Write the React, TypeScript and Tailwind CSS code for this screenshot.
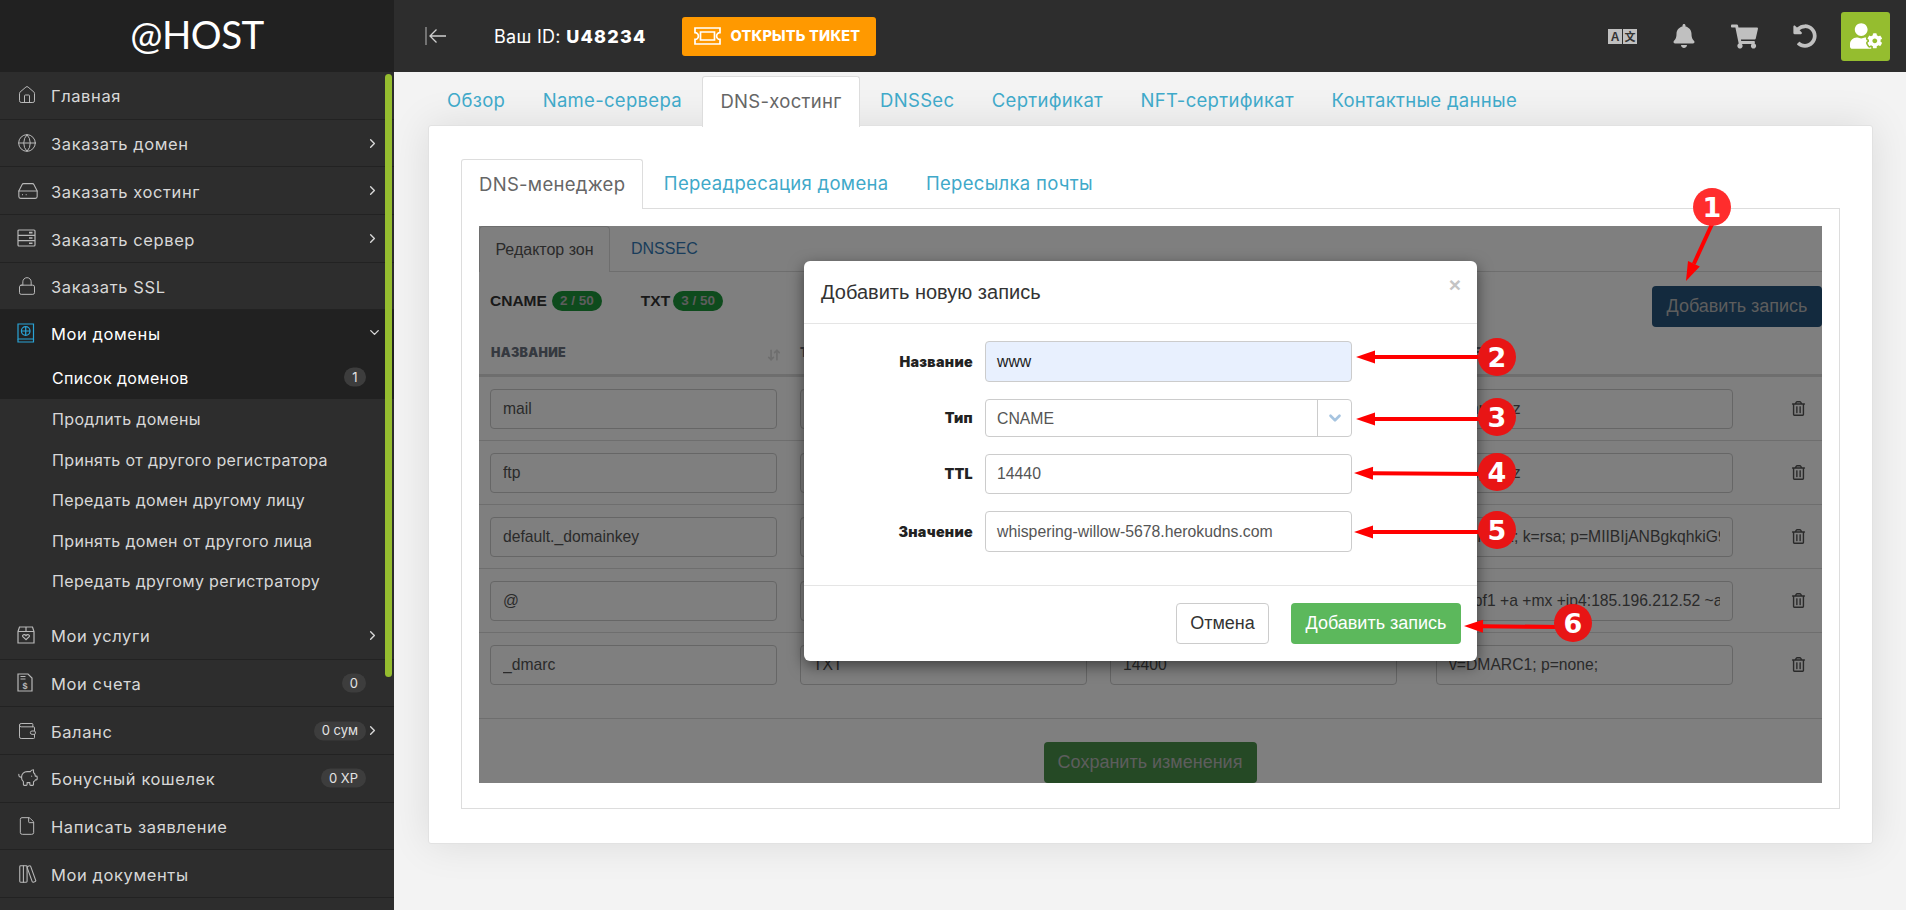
import {
  ArrowDownUp,
  ChevronDown,
  ChevronRight,
  File,
  Globe,
  HardDrive,
  House,
  LibraryBig,
  Lock,
  PiggyBank,
  Wallet,
} from "lucide-react";
import { FaBell, FaRegTrashAlt, FaShoppingCart, FaUndoAlt, FaUserCog } from "react-icons/fa";
import type { ReactNode } from "react";

const mont = "font-['Inter','Noto_Sans',sans-serif]";
const arial = "font-['Liberation_Sans',Arial,sans-serif]";

function PassportIcon() {
  return (
    <svg width="18" height="20" viewBox="0 0 18 20" fill="none" stroke="#2aa3d6" strokeWidth="1.2">
      <path d="M1 1h15.5v15H1z" />
      <path d="M1 16v3h15.5v-3" />
      <circle cx="8.7" cy="8" r="4.3" />
      <path d="M4.4 8h8.6M8.7 3.7v8.6" />
    </svg>
  );
}

function ServerIcon() {
  return (
    <svg width="19" height="18" viewBox="0 0 19 18" fill="none" stroke="#b8b8b8" strokeWidth="1.2">
      <rect x="1" y="1" width="17" height="16" rx="1" />
      <path d="M1 6.3h17M1 11.6h17" />
      <path d="M12 3.6h3.5M12 9h3.5M12 14.3h3.5" strokeWidth="1.6" />
    </svg>
  );
}

function BoxIcon() {
  return (
    <svg width="18" height="18" viewBox="0 0 18 18" fill="none" stroke="#b8b8b8" strokeWidth="1.2">
      <path d="M1 5.5 2.5 1h13L17 5.5V17H1z" />
      <path d="M1 5.5h16M9 1v4.5" />
      <path d="M9 13.6 5.8 10.6c-1-1.6 1.8-3 3.2-1 1.4-2 4.2-.6 3.2 1z" />
    </svg>
  );
}

function InvoiceIcon() {
  return (
    <svg width="16" height="19" viewBox="0 0 16 19" fill="none" stroke="#b8b8b8" strokeWidth="1.2">
      <path d="M1 1h10l4 4v13H1z" />
      <path d="M3.5 3.5h5M3.5 6h5" />
      <text x="8" y="15.5" fontSize="9" fontWeight="700" fontFamily="Liberation Sans" fill="#b8b8b8" stroke="none" textAnchor="middle">$</text>
    </svg>
  );
}

function TicketIcon() {
  return (
    <svg width="27" height="18" viewBox="0 0 27 18" fill="none" stroke="#fff" strokeWidth="1.7">
      <path d="M1 1h25v4.6a3.4 3.4 0 0 0 0 6.8V17H1v-4.6a3.4 3.4 0 0 0 0-6.8z" />
      <path d="M6.5 5h14v8h-14z" />
    </svg>
  );
}

function CollapseIcon() {
  return (
    <svg width="22" height="18" viewBox="0 0 22 18" fill="none" strokeWidth="1.3">
      <path d="M1 0v18" stroke="#9a9a9a" />
      <path d="M21 9H5M11.5 2.5 5 9l6.5 6.5" stroke="#cfcfcf" />
    </svg>
  );
}

function LangIcon() {
  return (
    <svg width="29" height="15" viewBox="0 0 29 15">
      <rect x="0" y="0" width="14" height="15" fill="#c0c0c0" />
      <rect x="15" y="0" width="14" height="15" fill="#c0c0c0" />
      <text x="7" y="12" textAnchor="middle" fontSize="12" fontWeight="700" fontFamily="Liberation Sans" fill="#333333">A</text>
      <text x="22" y="12" textAnchor="middle" fontSize="11" fontWeight="700" fontFamily="Noto Sans CJK SC" fill="#333333">文</text>
    </svg>
  );
}

const iconProps = { size: 20, strokeWidth: 1.2, color: "#b8b8b8" };

type Item = { label: string; icon: ReactNode; arrow?: boolean; badge?: string };

const topItems: Item[] = [
  { label: "Главная", icon: <House {...iconProps} /> },
  { label: "Заказать домен", icon: <Globe {...iconProps} />, arrow: true },
  { label: "Заказать хостинг", icon: <HardDrive {...iconProps} size={22} />, arrow: true },
  { label: "Заказать сервер", icon: <ServerIcon />, arrow: true },
  { label: "Заказать SSL", icon: <Lock {...iconProps} /> },
];

const subItems = [
  "Продлить домены",
  "Принять от другого регистратора",
  "Передать домен другому лицу",
  "Принять домен от другого лица",
  "Передать другому регистратору",
];

const bottomItems: Item[] = [
  { label: "Мои услуги", icon: <BoxIcon />, arrow: true },
  { label: "Мои счета", icon: <InvoiceIcon />, badge: "0" },
  { label: "Баланс", icon: <Wallet {...iconProps} />, badge: "0 сум", arrow: true },
  { label: "Бонусный кошелек", icon: <PiggyBank {...iconProps} size={22} />, badge: "0 XP" },
  { label: "Написать заявление", icon: <File {...iconProps} /> },
  { label: "Мои документы", icon: <LibraryBig {...iconProps} size={22} /> },
];

const labelText = "text-[16.5px] tracking-[0.6px]";
const subText = "text-[16px] tracking-[0.35px]";

function Badge({ children }: { children: ReactNode }) {
  return (
    <span className="absolute right-[28px] top-1/2 -translate-y-1/2 flex h-[19px] items-center rounded-full bg-[#3d3d3d] px-[8px] text-[13px] text-[#e4e4e4]">
      {children}
    </span>
  );
}

function SideRow({ item }: { item: Item }) {
  return (
    <div className="relative flex h-[47.7px] shrink-0 items-center border-b border-[#222222] text-[#d8d8d8]">
      <span className="flex w-[51px] justify-start pl-[17px]">{item.icon}</span>
      <span className={`mt-[3px] ${labelText}`}>{item.label}</span>
      {item.badge && <Badge>{item.badge}</Badge>}
      {item.arrow && <ChevronRight className="absolute right-[14px]" size={15} color="#d8d8d8" strokeWidth={2.2} />}
    </div>
  );
}

function Sidebar() {
  return (
    <aside className={`relative flex h-full w-[394px] shrink-0 flex-col overflow-hidden bg-[#2d2d2d] ${mont}`}>
      <div className="flex h-[72px] shrink-0 items-center justify-center bg-[#212121] pb-[3px] font-['Lato',sans-serif] text-[38.5px] tracking-[-0.5px] text-white">
        @HOST
      </div>
      {topItems.map((item) => (
        <SideRow key={item.label} item={item} />
      ))}
      <div className="h-[88.5px] shrink-0 bg-[#212121] text-white">
        <div className="relative flex h-[45px] items-center">
          <span className="flex w-[51px] pl-[17px]"><PassportIcon /></span>
          <span className={`mt-[3px] ${labelText}`}>Мои домены</span>
          <ChevronDown className="absolute right-[12px]" size={15} strokeWidth={2.2} color="#d8d8d8" />
        </div>
        <div className={`relative flex h-[43px] items-center pl-[52px] pt-[3px] ${subText}`}>
          Список доменов
          <Badge>1</Badge>
        </div>
      </div>
      <div className="flex h-[213px] shrink-0 flex-col text-[#d8d8d8]">
        {subItems.map((label) => (
          <div key={label} className={`flex h-[40.5px] shrink-0 items-center pl-[52px] ${subText}`}>
            {label}
          </div>
        ))}
      </div>
      {bottomItems.map((item) => (
        <SideRow key={item.label} item={item} />
      ))}
      <div className="absolute right-[2px] top-[74px] h-[603px] w-[7px] rounded-full bg-[#95bd2f]" />
    </aside>
  );
}

function TopBar() {
  return (
    <header className={`flex h-[72px] shrink-0 items-center bg-[#2d2d2d] pl-[31px] pr-[16px] text-white ${mont}`}>
      <CollapseIcon />
      <span className="ml-[47px] text-[18px] tracking-[0.3px]">
        Ваш ID: <b className="font-extrabold tracking-[1.2px]">U48234</b>
      </span>
      <button className="ml-[35px] flex h-[39px] w-[194px] items-center rounded-[3px] bg-[#ff9900] pl-[12px] text-[14.5px] font-extrabold tracking-[0.2px]">
        <TicketIcon />
        <span className="ml-[10px]">ОТКРЫТЬ ТИКЕТ</span>
      </button>
      <div className="ml-auto flex items-center text-[#c0c0c0]">
        <LangIcon />
        <FaBell size={24} className="ml-[34.5px]" />
        <FaShoppingCart size={27} className="ml-[35.5px]" />
        <FaUndoAlt size={24} className="ml-[35px]" />
        <div className="ml-[24px] flex size-[49px] items-center justify-center rounded-[3px] bg-[#95bd2f] text-white">
          <FaUserCog size={32} />
        </div>
      </div>
    </header>
  );
}

function Tabs({ items, active, size }: { items: string[]; active: string; size: string }) {
  return (
    <div className={`flex text-[18.5px] tracking-[0.3px] ${size}`}>
      {items.map((t) =>
        t === active ? (
          <div key={t} className="relative z-10 -mb-[1px] mr-[3.5px] flex items-center rounded-t-[3px] border border-b-0 border-[#dddddd] bg-white px-[17px] text-[#666666]">
            {t}
          </div>
        ) : (
          <div key={t} className="mr-[3.5px] flex items-center px-[17px] text-[#3fa9c9]">
            {t}
          </div>
        ),
      )}
    </div>
  );
}

const rows = [
  { name: "mail", type: "CNAME", value: "sample.uz" },
  { name: "ftp", type: "CNAME", value: "sample.uz" },
  { name: "default._domainkey", type: "TXT", value: "v=DKIM1; k=rsa; p=MIIBIjANBgkqhkiG9w0BAQEFAAOCAQ8A" },
  { name: "@", type: "TXT", value: "v=spf1 +a +mx +ip4:185.196.212.52 ~all" },
  { name: "_dmarc", type: "TXT", value: "v=DMARC1; p=none;" },
];

function Cell({ w, children }: { w: string; children: ReactNode }) {
  return (
    <div className={`flex h-[40px] shrink-0 items-center rounded-[4px] border border-[#cccccc] px-[12px] text-[15.7px] text-[#555555] ${w}`}>
      <span className="block w-full overflow-hidden whitespace-nowrap">{children}</span>
    </div>
  );
}

function HeadCell({ w, children }: { w: string; children: ReactNode }) {
  return (
    <div className={`flex shrink-0 items-center justify-between ${w}`}>
      <span className={`${mont} text-[12.5px] font-black tracking-[0.3px] text-[#6b7280]`}>{children}</span>
    </div>
  );
}

function ZoneEditor() {
  return (
    <div className={`relative mx-[17px] mt-[17px] h-[557px] ${arial}`}>
      <div className="flex h-[46px] border-b border-[#dddddd] text-[16px]">
        <div className="relative -mb-[1px] flex w-[131px] items-center justify-center rounded-t-[4px] border border-b-0 border-[#dddddd] bg-white text-[#555555]">
          Редактор зон
        </div>
        <div className="flex items-center pl-[21px] text-[#337ab7]">DNSSEC</div>
      </div>
      <div className="flex h-[58px] items-center justify-between pl-[11px]">
        <div className="flex items-center text-[15.5px] font-bold text-[#333333]">
          CNAME
          <span className="ml-[5px] flex h-[20px] w-[50px] items-center justify-center rounded-full bg-[#1c973a] text-[13.5px] text-[#bababa]">2 / 50</span>
          <span className="ml-[39px]">TXT</span>
          <span className="ml-[3px] flex h-[20px] w-[50px] items-center justify-center rounded-full bg-[#1c973a] text-[13.5px] text-[#bababa]">3 / 50</span>
        </div>
        <button className="mt-[10px] h-[41px] w-[170px] rounded-[4px] bg-[#26547c] text-[18px] text-[#bababa]">
          Добавить запись
        </button>
      </div>
      <div className="relative flex h-[47px] items-center border-b-[3px] border-[#dddddd] pl-[12px] pt-[3px]">
        <HeadCell w="w-[309px]">НАЗВАНИЕ</HeadCell>
        <HeadCell w="w-[310px]">ТИП</HeadCell>
        <HeadCell w="w-[326px]">TTL</HeadCell>
        <HeadCell w="w-[297px]">ЗНАЧЕНИЕ</HeadCell>
        <ArrowDownUp size={14} strokeWidth={3} color="#dddddd" className="absolute left-[288px] top-[18px]" />
      </div>
      {rows.map((r, i) => (
        <div
          key={r.name}
          className={`flex border-b border-[#dddddd] pl-[11px] ${i === rows.length - 1 ? "h-[86px] pt-[12px]" : "h-[64px] items-center"}`}
        >
          <Cell w="w-[287px]">{r.name}</Cell>
          <Cell w="ml-[23px] w-[287px]">{r.type}</Cell>
          <Cell w="ml-[23px] w-[287px]">14400</Cell>
          <Cell w="ml-[39px] w-[297px]">{r.value}</Cell>
          <FaRegTrashAlt size={15} className={`ml-[58px] text-[#555555] ${i === rows.length - 1 ? "mt-[12px]" : ""}`} />
        </div>
      ))}
      <div className="flex h-[64px] items-end justify-center pr-[1px]">
        <button className="h-[41px] w-[213px] rounded-[4px] bg-[#4a924a] text-[18px] text-[#bababa]">
          Сохранить изменения
        </button>
      </div>
      <div className="absolute inset-0 z-10 bg-[rgba(0,0,0,0.5)]" />
    </div>
  );
}

function Field({ label, value, h, tone }: { label: string; value: string; h: string; tone?: string }) {
  return (
    <div className="flex items-center">
      <div className={`${mont} w-[169px] pr-[12px] text-right text-[14.3px] font-black tracking-[0.3px] text-[#222222]`}>{label}</div>
      <div className={`flex w-[367px] items-center rounded-[4px] border border-[#cccccc] pl-[11px] text-[15.8px] ${h} ${tone ?? "bg-white text-[#555555]"}`}>
        {value}
      </div>
    </div>
  );
}

function RecordDialog() {
  return (
    <div className={`absolute left-[804px] top-[261px] flex h-[400px] w-[673px] flex-col rounded-[6px] bg-white shadow-[0_5px_15px_rgba(0,0,0,0.5)] ${arial}`}>
      <div className="relative flex h-[63px] shrink-0 items-center border-b border-[#e5e5e5] pl-[17px] text-[20px] text-[#333333]">
        Добавить новую запись
        <span className="absolute right-[16px] top-[10px] text-[21px] font-bold leading-[28px] text-[#c4c4c4]">×</span>
      </div>
      <div className="flex h-[262px] shrink-0 flex-col border-b border-[#e5e5e5] pl-[12px] pt-[17px]">
        <Field label="Название" value="www" h="h-[41px]" tone="bg-[#e8f0fe] text-[#222222]" />
        <div className="relative mt-[17px]">
          <Field label="Тип" value="CNAME" h="h-[38px] pt-[1px]" />
          <div className="absolute left-[501px] top-0 flex h-[38px] w-[35px] items-center justify-center border-l border-[#cccccc]">
            <ChevronDown size={18} strokeWidth={3.5} color="#a6c4e0" />
          </div>
        </div>
        <div className="mt-[17px]"><Field label="TTL" value="14440" h="h-[40px]" /></div>
        <div className="mt-[17px]"><Field label="Значение" value="whispering-willow-5678.herokudns.com" h="h-[41px]" /></div>
      </div>
      <div className="flex flex-1 items-center justify-end gap-[22px] pr-[16px] text-[18px]">
        <button className="h-[41px] w-[93px] rounded-[4px] border border-[#cccccc] bg-white text-[#333333]">Отмена</button>
        <button className="h-[41px] w-[170px] rounded-[4px] bg-[#5cb85c] text-white">Добавить запись</button>
      </div>
    </div>
  );
}

function Pin({ n, x, y, fill = "#e81515" }: { n: string; x: number; y: number; fill?: string }) {
  return (
    <g>
      <circle cx={x} cy={y} r="19" fill={fill} />
      <text x={x} y={y + 10} textAnchor="middle" fontSize="27" fontWeight="700" fontFamily="DejaVu Sans" fill="#fff">
        {n}
      </text>
    </g>
  );
}

function Arrow({ x1, y1, x2, y2 }: { x1: number; y1: number; x2: number; y2: number }) {
  const a = Math.atan2(y2 - y1, x2 - x1);
  const len = 19;
  const wid = 6.5;
  const bx = x2 - Math.cos(a) * len;
  const by = y2 - Math.sin(a) * len;
  const px = -Math.sin(a) * wid;
  const py = Math.cos(a) * wid;
  return (
    <g>
      <line x1={x1} y1={y1} x2={bx} y2={by} stroke="#ff0000" strokeWidth="4" />
      <polygon points={`${x2},${y2} ${bx + px},${by + py} ${bx - px},${by - py}`} fill="#ff0000" />
    </g>
  );
}

function Annotations() {
  return (
    <svg className="pointer-events-none absolute left-0 top-0 z-30" width="1906" height="910">
      <Arrow x1={1713} y1={222} x2={1686} y2={281} />
      <Arrow x1={1485} y1={357} x2={1356} y2={357} />
      <Arrow x1={1485} y1={419} x2={1356} y2={419} />
      <Arrow x1={1485} y1={474} x2={1354} y2={473} />
      <Arrow x1={1485} y1={532} x2={1354} y2={532} />
      <Arrow x1={1560} y1={627} x2={1464} y2={626} />
      <Pin n="1" x={1712} y={207} fill="#ff2d2d" />
      <Pin n="2" x={1497} y={357} />
      <Pin n="3" x={1497} y={417} />
      <Pin n="4" x={1497} y={472} />
      <Pin n="5" x={1497} y={530} />
      <Pin n="6" x={1573} y={623} />
    </svg>
  );
}

export default function App() {
  return (
    <div className="relative flex h-screen w-full overflow-hidden bg-[#f3f3f3]">
      <Sidebar />
      <div className="flex min-w-0 flex-1 flex-col">
        <TopBar />
        <main className={`flex-1 pl-[34px] pr-[33px] pt-[4px] ${mont}`}>
          <div className="ml-[2px] h-[50px]">
            <Tabs
              size="h-[50px]"
              active="DNS-хостинг"
              items={["Обзор", "Name-сервера", "DNS-хостинг", "DNSSec", "Сертификат", "NFT-сертификат", "Контактные данные"]}
            />
          </div>
          <div className="-mt-[1px] h-[719px] rounded-[3px] border border-[#e2e2e2] bg-white px-[32px] pt-[33px] shadow-[0_0_40px_rgba(0,0,0,0.1)]">
            <div className="h-[49px]">
              <Tabs
                size="h-[49px]"
                active="DNS-менеджер"
                items={["DNS-менеджер", "Переадресация домена", "Пересылка почты"]}
              />
            </div>
            <div className="h-[601px] border border-[#dddddd]">
              <ZoneEditor />
            </div>
          </div>
        </main>
      </div>
      <div className="absolute inset-0 z-20">
        <RecordDialog />
      </div>
      <Annotations />
    </div>
  );
}
